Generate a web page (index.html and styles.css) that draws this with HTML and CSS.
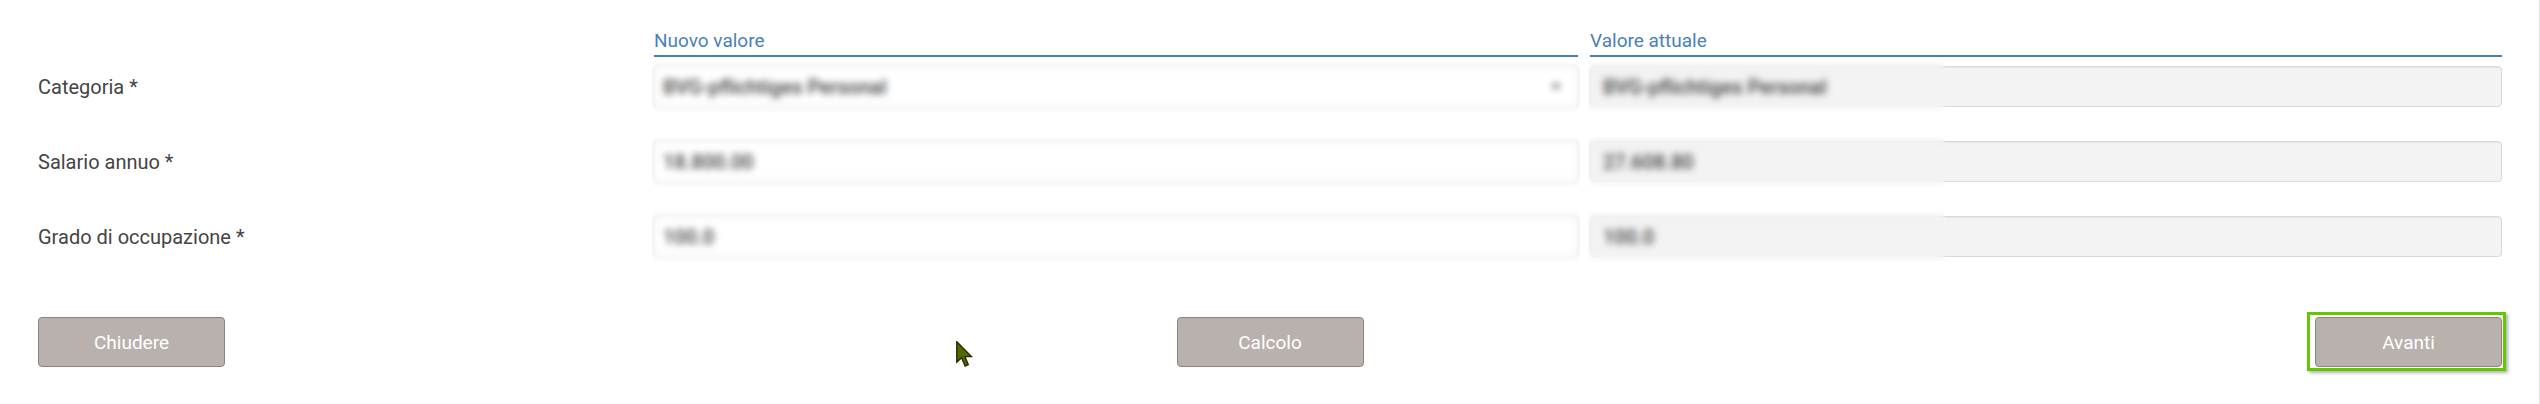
FILE: index.html
```html
<!DOCTYPE html>
<html lang="it">
<head>
    <meta charset="UTF-8">
    <meta name="viewport" content="width=device-width, initial-scale=1.0">
    <title>Mutazione - Salario</title>
    <link rel="stylesheet" href="styles.css">
</head>
<body>
<div class="page">
    <form class="mutation-form">
        <div class="form-row head-row">
            <div></div>
            <div class="col-title">Nuovo valore</div>
            <div class="col-title">Valore attuale</div>
        </div>

        <div class="form-row">
            <label class="field-label">Categoria *</label>
            <div class="field new-value">
                <div class="input select">
                    <span>BVG-pflichtiges Personal</span>
                    <span class="caret"></span>
                </div>
                <div class="blur"></div>
            </div>
            <div class="field current">
                <div class="input"><span>BVG-pflichtiges Personal</span></div>
                <div class="blur"></div>
            </div>
        </div>

        <div class="form-row">
            <label class="field-label">Salario annuo *</label>
            <div class="field new-value">
                <div class="input"><span>18.800.00</span></div>
                <div class="blur"></div>
            </div>
            <div class="field current">
                <div class="input"><span>27.608.80</span></div>
                <div class="blur"></div>
            </div>
        </div>

        <div class="form-row">
            <label class="field-label">Grado di occupazione *</label>
            <div class="field new-value">
                <div class="input"><span>100.0</span></div>
                <div class="blur"></div>
            </div>
            <div class="field current">
                <div class="input"><span>100.0</span></div>
                <div class="blur"></div>
            </div>
        </div>

        <div class="actions">
            <button type="button" class="btn">Chiudere</button>
            <button type="button" class="btn">Calcolo</button>
            <div class="focus-ring">
                <button type="submit" class="btn">Avanti</button>
            </div>
        </div>
    </form>

    <!-- puntatore del mouse -->
    <svg class="cursor" width="18" height="26" viewBox="0 0 13 19">
        <path d="M0.5 0.5 L0.5 15.5 L4 12.2 L6.6 18.3 L8.9 17.3 L6.4 11.4 L11.2 11.4 Z" fill="#4d6b00" stroke="#2a2600" stroke-width="1"/>
    </svg>
</div>
</body>
</html>
```

FILE: styles.css
```css
body {
    margin: 0;
    font-family: Roboto, "Liberation Sans", sans-serif;
    color: #444;
    background: #fff;
}

.page {
    position: relative;
    min-height: 404px;
    box-sizing: border-box;
    padding: 30px 37px 0 38px;
    border-right: 1px solid #e4e4e4;
}

.form-row {
    display: grid;
    grid-template-columns: 604px 924px 912px;
    column-gap: 12px;
    align-items: center;
    margin-bottom: 34px;
}

.head-row {
    margin-bottom: 9px;
}

.col-title {
    font-size: 19px;
    line-height: 22px;
    color: #4a7fbd;
    padding-bottom: 3px;
    border-bottom: 2px solid #4a7fb6;
}

.field-label {
    font-size: 20px;
    color: #444;
}

.field {
    position: relative;
}

.input {
    display: flex;
    align-items: center;
    height: 41px;
    box-sizing: border-box;
    padding: 0 12px;
    border-radius: 4px;
    font-size: 20px;
    font-weight: 500;
    color: #444;
}

.new-value .input {
    background: #fff;
    border: 1px solid #e4e4e4;
    padding-left: 8px;
    box-shadow: 0 0 2px 2px #f4f4f4;
}

.current .input {
    background: #f3f3f3;
    border: 1px solid #d9d9d9;
    box-shadow: inset 0 1px 1px rgba(0, 0, 0, 0.05);
}

.caret {
    margin-left: auto;
    margin-right: 4px;
    border-left: 5px solid transparent;
    border-right: 5px solid transparent;
    border-top: 6px solid #666;
}

/* zone oscurate */
.blur {
    position: absolute;
    top: -4px;
    bottom: -5px;
    left: -1px;
    right: -1px;
    backdrop-filter: blur(3.5px);
}

.current .blur {
    left: -2px;
    right: auto;
    width: 357px;
}

.actions {
    display: flex;
    justify-content: space-between;
    align-items: flex-start;
    margin-top: 60px;
}

.btn {
    width: 187px;
    height: 50px;
    background: #b9b1ad;
    border: 1px solid #8c837e;
    border-radius: 4px;
    color: #fff;
    font-family: Roboto, "Liberation Sans", sans-serif;
    font-size: 19px;
    cursor: pointer;
}

.focus-ring {
    margin: -5px -4px -4px -8px;
    padding: 2px 1px 1px 5px;
    border: 3px solid #62c900;
    box-shadow: 2px 2px 3px rgba(0, 0, 0, 0.3);
    display: flex;
}

.cursor {
    position: absolute;
    left: 956px;
    top: 341px;
}
```
